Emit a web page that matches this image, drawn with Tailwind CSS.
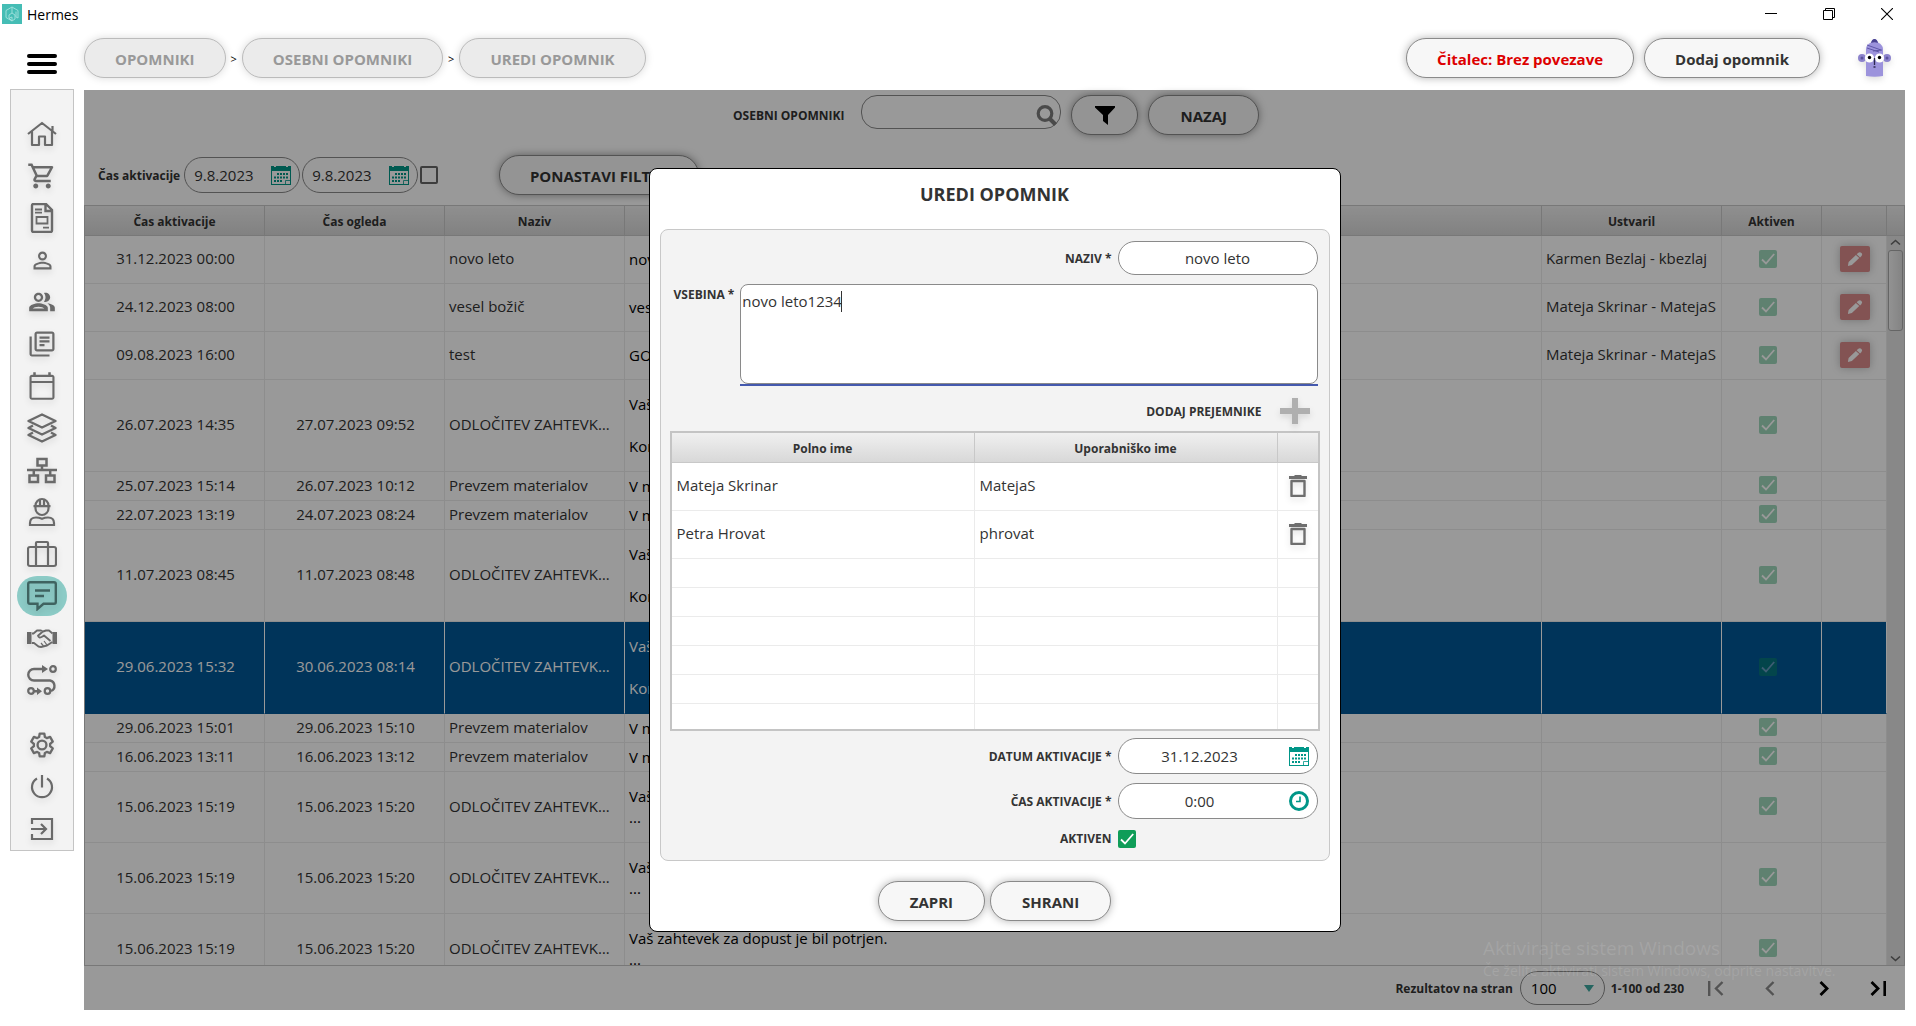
<!DOCTYPE html>
<html lang="sl">
<head>
    <meta charset="UTF-8">
    <meta name="viewport" content="width=device-width, initial-scale=1.0">
    <title>Hermes</title>
    <script src="https://cdn.jsdelivr.net/npm/@tailwindcss/browser@4"></script>
</head>
<body class="h-screen flex flex-col overflow-hidden bg-white font-['Open_Sans','Noto_Sans',sans-serif] text-[15px] leading-[21px] text-[#333]">

    <!-- Icon sprite -->
    <svg class="hidden">
        <symbol id="i-home" viewBox="0 0 30 30"><path d="M1 15L15 4l14 11M5 12.500V26h7v-8.500h6V26h7V12.500M25.500 7v6" fill="none" stroke="currentColor" stroke-width="2.200" stroke-linejoin="round"/></symbol>
        <symbol id="i-cart" viewBox="0 0 24 24"><path fill="currentColor" d="M15.550 13c.75 0 1.410-.41 1.750-1.030l3.580-6.490A.996.996 0 0 0 20.010 4H5.210l-.94-2H1v2h2l3.600 7.590-1.350 2.440C4.520 15.370 5.480 17 7 17h12v-2H7l1.100-2h7.450zM6.160 6h12.150l-2.760 5H8.530L6.160 6zM7 18c-1.100 0-1.990.9-1.990 2S5.900 22 7 22s2-.9 2-2-.9-2-2-2zm10 0c-1.100 0-1.990.9-1.990 2s.89 2 1.990 2 2-.9 2-2-.9-2-2-2z"/></symbol>
        <symbol id="i-doc" viewBox="0 0 30 30"><path d="M5 2.500q0-1.500 1.500-1.500H19l6 6v20.500q0 1.500-1.500 1.500h-17Q5 29 5 27.500zM18.500 1v7H25" fill="none" stroke="currentColor" stroke-width="2.400"/><path d="M9.500 14h11v6.500h-11zM8 6.500h7M8 9.700h7M16 24.700h6" fill="none" stroke="currentColor" stroke-width="1.800"/></symbol>
        <symbol id="i-person" viewBox="0 0 24 24"><path fill="currentColor" d="M12 5.900c1.160 0 2.100.94 2.100 2.100s-.94 2.100-2.100 2.100S9.900 9.160 9.900 8s.94-2.100 2.100-2.100m0 9c2.970 0 6.100 1.460 6.100 2.100v1.100H5.900V17c0-.64 3.130-2.100 6.100-2.100M12 4C9.790 4 8 5.790 8 8s1.790 4 4 4 4-1.790 4-4-1.790-4-4-4zm0 9c-2.670 0-8 1.340-8 4v3h16v-3c0-2.660-5.330-4-8-4z"/></symbol>
        <symbol id="i-people" viewBox="0 0 24 24"><path fill="currentColor" fill-rule="evenodd" d="M16.670 13.130C18.040 14.060 19 15.320 19 17v3h4v-3c0-2.180-3.570-3.470-6.330-3.870zM15 12c2.210 0 4-1.790 4-4s-1.790-4-4-4c-.47 0-.91.1-1.330.24C14.500 5.270 15 6.580 15 8s-.5 2.730-1.330 3.760c.42.14.86.24 1.330.24zM9 12c2.210 0 4-1.790 4-4s-1.790-4-4-4-4 1.790-4 4 1.790 4 4 4zm0-6c1.100 0 2 .9 2 2s-.9 2-2 2-2-.9-2-2 .9-2 2-2zM9 13c-2.670 0-8 1.340-8 4v3h16v-3c0-2.660-5.330-4-8-4zm5 4.500H4c.5-.7 2.800-1.500 5-1.500s4.500.8 5 1.500z"/></symbol>
        <symbol id="i-library" viewBox="0 0 24 24"><path fill="currentColor" fill-rule="evenodd" d="M4 6H2v14c0 1.100.9 2 2 2h14v-1.700H3.800V6zm16-4H8c-1.100 0-2 .9-2 2v12c0 1.100.9 2 2 2h12c1.100 0 2-.9 2-2V4c0-1.100-.9-2-2-2zm.2 14.200H7.800V3.800h12.400v12.400zM10 9h8v1.700h-8zM10 12h4v1.700h-4zM10 6h8v1.700h-8z"/></symbol>
        <symbol id="i-calendar" viewBox="0 0 24 24"><path fill="currentColor" fill-rule="evenodd" d="M20 3h-1V1h-2v2H7V1H5v2H4c-1.100 0-2 .9-2 2v16c0 1.100.9 2 2 2h16c1.100 0 2-.9 2-2V5c0-1.100-.9-2-2-2zm.3 18.300H3.700V9.500h16.600v11.800zm0-13.300H3.700V4.700h16.600V8z"/></symbol>
        <symbol id="i-layers" viewBox="0 0 30 30"><path d="M15 1.500l13.500 6.500L15 14.500 1.500 8zM6 12.500l-4.500 2.500L15 21.500 28.500 15 24 12.500M6 19.500L1.500 22 15 28.500 28.500 22 24 19.500" fill="none" stroke="currentColor" stroke-width="2.400" stroke-linejoin="round"/></symbol>
        <symbol id="i-network" viewBox="0 0 30 30"><path d="M10.500 4h9v6.500h-9zM2.500 20.500H11V27H2.500zM19 20.500h8.500V27H19zM15 10.500V15M0 15h30M6.800 15v5.500M23.200 15v5.500" fill="none" stroke="currentColor" stroke-width="2.500"/></symbol>
        <symbol id="i-worker" viewBox="0 0 30 30"><path d="M8.500 8.500v3a6.500 6.500 0 0 0 13 0v-3a6.500 6.500 0 0 0-13 0zM6.500 9.200h17M13 2.500v6.500M17 2.500v6.500M3 28v-2q0-5.500 6-5.500 3 0 6 1.200 3-1.200 6-1.200 6 0 6 5.500v2z" fill="none" stroke="currentColor" stroke-width="2.200"/></symbol>
        <symbol id="i-case" viewBox="0 0 30 30"><path d="M3 8h24q2 0 2 2v15q0 2-2 2H3q-2 0-2-2V10q0-2 2-2zM9 27V4q0-1 1-1h10q1 0 1 1v23" fill="none" stroke="currentColor" stroke-width="2.200"/></symbol>
        <symbol id="i-chat" viewBox="0 0 30 30"><path d="M3 1.200h24q1.800 0 1.800 1.800v18q0 1.800-1.800 1.800H16.500L10.500 28v-5.200H3q-1.800 0-1.800-1.800V3q0-1.800 1.800-1.800zM8 9.500h15M8 15h9" fill="none" stroke="currentColor" stroke-width="2.400"/></symbol>
        <symbol id="i-handshake" viewBox="0 0 30 30"><path d="M0 9h4.500v12H0zM25.500 9H30v12h-4.500z" fill="currentColor"/><path d="M5 10.500h1.500L10 7.500h4l2 1 3-1h3l3.500 3M5 20l2 0 4.500 3.500 2.500.5 2-.5 4-1 4.500-3 1-.5M15.500 8.800l-4.500 4q1 3 4.500.7l1.500-1 6.500 5.500" fill="none" stroke="currentColor" stroke-width="1.900" stroke-linejoin="round"/><path d="M14 20l2.500 3M17 18l3 4" fill="none" stroke="currentColor" stroke-width="1.200"/></symbol>
        <symbol id="i-route" viewBox="0 0 30 30"><path d="M17 4H7a5.500 5.500 0 0 0 0 11.500h16a5.500 5.500 0 0 1 1 10.500M6 26.200h5" fill="none" stroke="currentColor" stroke-width="2.400"/><circle cx="26" cy="4" r="2.800" fill="none" stroke="currentColor" stroke-width="2.200"/><circle cx="4" cy="26" r="2.800" fill="none" stroke="currentColor" stroke-width="2.200"/><circle cx="20.500" cy="26" r="2.800" fill="none" stroke="currentColor" stroke-width="2.200"/><path d="M15 0l6 4-6 4zM10 22.500l5 3.700-5 3.700z" fill="currentColor"/></symbol>
        <symbol id="i-gear" viewBox="0 0 24 24"><g fill="none" stroke="currentColor" stroke-width="2" stroke-linejoin="round"><path d="M18.930 12.980c.04-.32.07-.64.07-.98 0-.34-.03-.66-.07-.98l2.310-1.950-2.300-4-2.780 1.080c-.52-.4-1.080-.73-1.690-.98L14 2.300h-4l-.47 2.870c-.61.25-1.170.59-1.690.98L5.060 5.070l-2.300 4 2.310 1.950c-.04.32-.07.65-.07.98 0 .33.03.66.07.98l-2.310 1.950 2.300 4 2.780-1.080c.52.4 1.080.73 1.690.98L10 21.700h4l.47-2.870c.61-.25 1.170-.59 1.690-.98l2.780 1.080 2.300-4z"/><circle cx="12" cy="12" r="3.800"/></g></symbol>
        <symbol id="i-power" viewBox="0 0 30 30"><path d="M10 6.500A10 10 0 1 0 20 6.500M15 3v12.500" fill="none" stroke="currentColor" stroke-width="2.200"/></symbol>
        <symbol id="i-exit" viewBox="0 0 30 30"><path d="M5 10V5h20v20H5v-5M4 15h14.500M14 10l5 5-5 5" fill="none" stroke="currentColor" stroke-width="2.200"/></symbol>
        <symbol id="i-date" viewBox="0 0 20 20"><path fill="currentColor" fill-rule="evenodd" d="M0 1h3v1h2V1h10v1h2V1h3v19H0zM1 6v13h18V6z"/><path fill="currentColor" d="M6 8h2v2H6zM9 8h2v2H9zM12 8h2v2h-2zM15 8h2v2h-2zM3 11.500h2v2H3zM6 11.500h2v2H6zM9 11.500h2v2H9zM12 11.500h2v2h-2zM15 11.500h2v2h-2zM3 15h2v2H3zM6 15h2v2H6zM9 15h2v2H9z"/><path d="M14.500 19v-3.500H19" fill="none" stroke="currentColor" stroke-width=".8"/></symbol>
        <symbol id="i-clock" viewBox="0 0 20 20"><circle cx="10" cy="10" r="8.500" fill="none" stroke="currentColor" stroke-width="3"/><path d="M11 5.500v5H7" fill="none" stroke="currentColor" stroke-width="1.600"/></symbol>
        <symbol id="i-check" viewBox="0 0 18 18"><path d="M3 9.500l4 4L15.200 4" fill="none" stroke="currentColor" stroke-width="1.800"/></symbol>
        <symbol id="i-pencil" viewBox="0 0 18 18"><path fill="currentColor" d="M1 17l.8-4.500L10 4.500 13.800 8l-8.300 7.800zM10.900 3.600l1.500-1.400q2-1.800 3.900 0 1.600 1.800-.2 3.600L14.700 7.200z"/></symbol>
        <symbol id="i-trash" viewBox="0 0 18 22"><path fill="currentColor" d="M0 1h5l1-1h6l1 1h5v3H0z"/><path d="M2.500 6h13v15h-13z" fill="none" stroke="currentColor" stroke-width="2.400" stroke-linejoin="round"/></symbol>
    </svg>

    <!-- Title bar -->
    <div class="h-7 shrink-0 flex items-center pl-[2px] text-black">
        <svg class="size-5" viewBox="0 0 20 20"><path fill="#45bdb5" d="M0 0h20v20H0z"/><path d="M10 3l6 3.500V14l-2-1V7.500M10 3L4 6.500v7L10 17v-4l-2.500 1M10 3v6L7 11v3l3 3 3-2v-4l-3-2" fill="none" stroke="#a5e3df" stroke-width=".9"/></svg>
        <span class="ml-[5px] text-[14px]">Hermes</span>
        <div class="ml-auto flex h-full">
            <button class="w-[58px] flex items-center justify-center" aria-label="Pomanjšaj"><svg class="size-3" viewBox="0 0 12 12"><path d="M0 5.500h12" stroke="#000"/></svg></button>
            <button class="w-[58px] flex items-center justify-center" aria-label="Obnovi"><svg class="size-3" viewBox="0 0 12 12"><path d="M.5 2.500h9v9h-9zM2.500 2.500v-2h9v9h-2" fill="none" stroke="#000"/></svg></button>
            <button class="w-[58px] flex items-center justify-center" aria-label="Zapri okno"><svg class="size-3" viewBox="0 0 12 12"><path d="M0 0l12 12M12 0L0 12" stroke="#000" stroke-width="1.100"/></svg></button>
        </div>
    </div>

    <!-- Header with breadcrumbs -->
    <header class="shrink-0 flex items-center pt-[10px] pb-[11px] pr-[25px]">
        <div class="w-[84px] shrink-0 self-end mb-1 flex justify-center">
            <button aria-label="Meni"><svg class="w-[30px] h-5 block" viewBox="0 0 30 20"><path d="M2 2h26M2 10h26M2 18h26" stroke="#000" stroke-width="4" stroke-linecap="round"/></svg></button>
        </div>
        <nav class="flex items-center gap-[5px] text-[11px] text-black">
            <button class="h-10 px-[30px] pt-[2px] rounded-full border border-[#bbb] bg-[#ebebeb] text-[15px] font-bold text-[#999] shadow-[0_0_8px_rgba(0,0,0,0.15)]" disabled>OPOMNIKI</button>
            <span>&gt;</span>
            <button class="h-10 px-[30px] pt-[2px] rounded-full border border-[#bbb] bg-[#ebebeb] text-[15px] font-bold text-[#999] shadow-[0_0_8px_rgba(0,0,0,0.15)]" disabled>OSEBNI OPOMNIKI</button>
            <span>&gt;</span>
            <button class="h-10 px-[30px] pt-[2px] rounded-full border border-[#bbb] bg-[#ebebeb] text-[15px] font-bold text-[#999] shadow-[0_0_8px_rgba(0,0,0,0.15)]" disabled>UREDI OPOMNIK</button>
        </nav>
        <button class="ml-auto h-10 px-[30px] pt-[2px] rounded-full border border-[#8a8a8a] bg-[#f7f7f7] text-[15px] font-bold text-[#dd0000] shadow-[0_0_8px_rgba(0,0,0,0.3)]">Čitalec: Brez povezave</button>
        <button class="ml-[10px] h-10 px-[30px] pt-[2px] rounded-full border border-[#8a8a8a] bg-[#f7f7f7] text-[15px] font-bold shadow-[0_0_8px_rgba(0,0,0,0.3)]">Dodaj opomnik</button>
        <svg class="ml-[38px] w-[33px] h-[38px] drop-shadow-md" viewBox="0 0 33 38">
            <path d="M8 37V10q0-4 5-6.500Q14 0 16.500 0T20 3.500q5 2.500 5 6.500v27q-8 1.500-17 0z" fill="#9c93dc"/>
            <path d="M13 4q1-4 3.500-4T20 4q-3.500-1.500-7 0z" fill="#4a4390"/>
            <circle cx="4" cy="19" r="4" fill="#8c83cc"/><circle cx="29" cy="19" r="4" fill="#8c83cc"/>
            <circle cx="4" cy="19" r="1.500" fill="#5a529c"/><circle cx="29" cy="19" r="1.500" fill="#5a529c"/>
            <path d="M9 6l14 5M9 9l12 4M15 12l9-1" stroke="#5f57a8" fill="none"/>
            <circle cx="11.500" cy="19" r="4.600" fill="#fff"/><circle cx="21.500" cy="19" r="4.600" fill="#fff"/>
            <circle cx="11.500" cy="18.500" r="1.700"/><circle cx="21.500" cy="18.500" r="1.700"/>
            <path d="M16.500 19v7M15.500 28h2" stroke="#2c2850" stroke-width="1.300"/>
        </svg>
    </header>

    <div class="flex-1 min-h-0 flex pr-[11px] pb-4">
        <!-- Side menu -->
        <aside class="w-[84px] shrink-0 px-[10px]">
            <nav id="sideMenu" class="border border-[#c4c4c4] bg-[#f3f3f3] pt-[23px] flex flex-col items-center text-[#6a6a6a]"></nav>
        </aside>

        <section class="relative mt-px flex-1 min-w-0 flex flex-col bg-white">
            <!-- Search and filter -->
            <div class="flex justify-center items-start gap-[10px] pt-[5px] pl-[3px]">
                <label for="search" class="h-10 flex items-center text-[12px] font-bold mr-[7px]">OSEBNI OPOMNIKI</label>
                <div class="relative">
                    <input id="search" type="text" class="w-[200px] h-[34px] pl-3 pr-8 rounded-[16px] border border-[#8a8a8a]">
                    <svg class="absolute right-1 top-[10px] size-[21px] text-[#7c7c7c]" viewBox="0 0 21 21"><circle cx="9" cy="8.500" r="6.800" fill="none" stroke="currentColor" stroke-width="3.200"/><path d="M13.500 13.500l6 6" stroke="currentColor" stroke-width="4"/></svg>
                </div>
                <button aria-label="Filter" class="w-[67px] h-10 flex items-center justify-center rounded-full border border-[#8a8a8a] bg-[#f7f7f7] text-black shadow-[0_0_8px_rgba(0,0,0,0.4)]">
                    <svg class="w-5 h-[19px]" viewBox="0 0 20 19"><path d="M0 0h20v1.500L13 9v10l-5-4V9L0 1.500z" fill="currentColor"/></svg>
                </button>
                <button class="h-10 px-[31px] pt-[2px] rounded-full border border-[#8a8a8a] bg-[#f7f7f7] text-[15px] font-bold shadow-[0_0_8px_rgba(0,0,0,0.4)]">NAZAJ</button>
            </div>
            <div class="flex items-center pl-[14px] mt-5 mb-[10px]">
                <label for="dateFrom" class="text-[12px] font-bold mr-1">Čas aktivacije</label>
                <div class="relative mr-[2px]">
                    <input id="dateFrom" type="text" value="9.8.2023" class="block w-[116px] h-9 pl-[9px] rounded-full border border-[#8a8a8a]">
                    <svg class="absolute right-[9px] top-2 size-5 text-[#009688]"><use href="#i-date"/></svg>
                </div>
                <div class="relative mr-[2px]">
                    <input id="dateTo" type="text" aria-label="Čas aktivacije do" value="9.8.2023" class="block w-[116px] h-9 pl-[9px] rounded-full border border-[#8a8a8a]">
                    <svg class="absolute right-[9px] top-2 size-5 text-[#009688]"><use href="#i-date"/></svg>
                </div>
                <input type="checkbox" aria-label="Filtriraj po času" class="appearance-none size-[18px] rounded-[2px] border-2 border-[#666]">
                <button class="ml-[61px] h-10 w-[200px] pt-[2px] rounded-full border border-[#8a8a8a] bg-[#f7f7f7] text-[15px] font-bold shadow-[0_0_8px_rgba(0,0,0,0.4)]">PONASTAVI FILTRE</button>
            </div>

            <!-- Reminders table -->
            <div class="flex-1 min-h-0 overflow-hidden flex border border-[#c8c8c8]">
                <div class="flex-1 min-w-0 overflow-hidden">
                    <table class="w-full table-fixed border-separate border-spacing-0">
                        <colgroup><col class="w-[180px]"><col class="w-[180px]"><col class="w-[180px]"><col><col class="w-[180px]"><col class="w-[100px]"><col class="w-[65px]"></colgroup>
                        <thead>
                            <tr class="text-[12px] [&>th]:h-[30px] [&>th]:p-0 [&>th]:pt-[2px] [&>th]:font-bold [&>th]:border-r [&>th]:border-b [&>th]:border-[#c8c8c8] [&>th]:bg-linear-to-b [&>th]:from-[#efefef] [&>th]:to-[#d8d8d8]">
                                <th>Čas aktivacije</th><th>Čas ogleda</th><th>Naziv</th><th>Vsebina</th><th>Ustvaril</th><th>Aktiven</th><th></th>
                            </tr>
                        </thead>
                        <tbody id="reminders"></tbody>
                    </table>
                </div>
                <div class="w-[17px] shrink-0 flex flex-col bg-[#e3e3e3]">
                    <div class="h-[30px] shrink-0 border-b border-[#c8c8c8] bg-linear-to-b from-[#efefef] to-[#d8d8d8]"></div>
                    <svg class="w-full h-[14px] shrink-0" viewBox="0 0 17 14"><path d="M4 8.500l4.500-4 4.500 4" fill="none" stroke="#666" stroke-width="1.600"/></svg>
                    <div class="mx-px h-[81px] shrink-0 rounded-[3px] border border-[#a8a8a8] bg-linear-to-r from-[#f4f4f4] to-[#dcdcdc]"></div>
                    <svg class="mt-auto w-full h-[14px] shrink-0" viewBox="0 0 17 14"><path d="M4 5.500l4.500 4 4.500-4" fill="none" stroke="#666" stroke-width="1.600"/></svg>
                </div>
            </div>

            <!-- Paging -->
            <div class="h-11 shrink-0 flex items-center justify-end text-[12px] font-bold">
                <label for="pageSize" class="mr-[7px]">Rezultatov na stran</label>
                <div class="relative">
                    <select id="pageSize" class="block appearance-none w-[85px] h-[34px] pl-[10px] rounded-full border border-[#8a8a8a] text-[15px] font-normal text-black"><option>100</option></select>
                    <svg class="absolute right-[11px] top-[14px] w-[10px] h-[7px]" viewBox="0 0 10 7"><path d="M0 0h10L5 7z" fill="#3fa9a0"/></svg>
                </div>
                <span class="ml-[6px] mr-[5px]">1-100 od 230</span>
                <button class="w-[54px] flex justify-center text-[#8a8a8a]" aria-label="Prva stran"><svg class="w-4 h-[15px]" viewBox="0 0 16 15"><path d="M1.200 0v15M14.500 1L8 7.500l6.500 6.500" fill="none" stroke="currentColor" stroke-width="2.400"/></svg></button>
                <button class="w-[54px] flex justify-center text-[#8a8a8a]" aria-label="Prejšnja stran"><svg class="w-[10px] h-[15px]" viewBox="0 0 10 15"><path d="M8.500 1L2 7.500 8.500 14" fill="none" stroke="currentColor" stroke-width="2.400"/></svg></button>
                <button class="w-[54px] flex justify-center text-black" aria-label="Naslednja stran"><svg class="w-[10px] h-[15px]" viewBox="0 0 10 15"><path d="M1.500 1L8 7.500 1.500 14" fill="none" stroke="currentColor" stroke-width="2.800"/></svg></button>
                <button class="w-[54px] flex justify-center text-black" aria-label="Zadnja stran"><svg class="w-4 h-[15px]" viewBox="0 0 16 15"><path d="M14.800 0v15M1.500 1L8 7.500 1.500 14" fill="none" stroke="currentColor" stroke-width="2.800"/></svg></button>
            </div>

            <!-- Edit dialog -->
            <div class="absolute inset-0 bg-black/40 flex items-center justify-center">
                <div role="dialog" aria-labelledby="dialogTitle" class="w-[692px] px-[10px] pb-[10px] rounded-[8px] border border-black bg-white">
                    <h2 id="dialogTitle" class="h-[50px] mb-[10px] flex items-center justify-center text-[18px] font-bold">UREDI OPOMNIK</h2>
                    <form class="rounded-[8px] border border-[#c8c8c8] bg-[#f3f3f3] px-[9px] pt-[11px] pb-3" onsubmit="return false">
                        <div class="flex items-center justify-end gap-[6px] pr-[2px]">
                            <label for="name" class="text-[12px] font-bold">NAZIV *</label>
                            <input id="name" type="text" value="novo leto" class="w-[200px] h-[34px] rounded-full border border-[#8a8a8a] bg-white text-center">
                        </div>
                        <div class="flex gap-[6px] mt-[9px] pl-1 pr-[2px]">
                            <label for="content" class="text-[12px] font-bold shrink-0">VSEBINA *</label>
                            <div class="relative flex-1 border-b-2 border-[#4459ae]">
                                <textarea id="content" class="block w-full h-[100px] resize-none rounded-[8px] border border-[#8a8a8a] bg-white pl-px pt-[6px] outline-none">novo leto1234</textarea>
                                <span class="absolute left-[101px] top-[7px] w-px h-[21px] bg-[#333]"></span>
                            </div>
                        </div>
                        <div class="flex items-center justify-end gap-[18px] mt-3 mb-[7px] pr-[10px] h-[26px]">
                            <span class="text-[12px] font-bold">DODAJ PREJEMNIKE</span>
                            <button aria-label="Dodaj prejemnike"><svg class="w-[30px] h-[26px] drop-shadow-md" viewBox="0 0 30 26"><path d="M12 0h6v10h12v6H18v10h-6V16H0v-6h12z" fill="#afafaf"/></svg></button>
                        </div>
                        <div class="h-[300px] overflow-hidden border-2 border-[#c4c4c4] bg-white">
                            <table class="w-full table-fixed border-separate border-spacing-0">
                                <colgroup><col><col><col class="w-[40px]"></colgroup>
                                <thead>
                                    <tr class="text-[12px] [&>th]:h-[30px] [&>th]:p-0 [&>th]:pt-[2px] [&>th]:font-bold [&>th]:border-r [&>th]:border-b [&>th]:border-[#c8c8c8] [&>th:last-child]:border-r-0 [&>th]:bg-linear-to-b [&>th]:from-[#f0f0f0] [&>th]:to-[#d8d8d8]">
                                        <th>Polno ime</th><th>Uporabniško ime</th><th></th>
                                    </tr>
                                </thead>
                                <tbody id="recipients"></tbody>
                            </table>
                        </div>
                        <div class="flex items-center justify-end gap-[6px] mt-[7px] pr-[2px]">
                            <label for="actDate" class="text-[12px] font-bold">DATUM AKTIVACIJE *</label>
                            <div class="relative">
                                <input id="actDate" type="text" value="31.12.2023" class="block w-[200px] h-9 pr-9 rounded-full border border-[#8a8a8a] bg-white text-center">
                                <svg class="absolute right-[9px] top-2 size-5 text-[#009688]"><use href="#i-date"/></svg>
                            </div>
                        </div>
                        <div class="flex items-center justify-end gap-[6px] mt-[9px] pr-[2px]">
                            <label for="actTime" class="text-[12px] font-bold">ČAS AKTIVACIJE *</label>
                            <div class="relative">
                                <input id="actTime" type="text" value="0:00" class="block w-[200px] h-9 pr-9 rounded-full border border-[#8a8a8a] bg-white text-center">
                                <svg class="absolute right-[9px] top-2 size-5 text-[#009688]"><use href="#i-clock"/></svg>
                            </div>
                        </div>
                        <div class="flex items-center justify-end gap-[6px] mt-[11px] pr-[184px]">
                            <label for="active" class="text-[12px] leading-[18px] font-bold">AKTIVEN</label>
                            <span class="grid size-[18px]">
                                <input id="active" type="checkbox" checked class="[grid-area:1/1] appearance-none rounded-[2px] bg-[#0f9d58]">
                                <svg class="[grid-area:1/1] size-[18px] text-white pointer-events-none"><use href="#i-check"/></svg>
                            </span>
                        </div>
                    </form>
                    <div class="flex justify-center gap-[5px] mt-5">
                        <button class="h-10 px-[31px] pt-[2px] rounded-full border border-[#8a8a8a] bg-[#f7f7f7] text-[15px] font-bold shadow-[0_0_8px_rgba(0,0,0,0.3)]">ZAPRI</button>
                        <button class="h-10 px-[31px] pt-[2px] rounded-full border border-[#8a8a8a] bg-[#f7f7f7] text-[15px] font-bold shadow-[0_0_8px_rgba(0,0,0,0.3)]">SHRANI</button>
                    </div>
                </div>
            </div>
        </section>
    </div>

    <!-- Windows activation notice -->
    <div class="absolute right-[75px] bottom-11 w-[358px] whitespace-nowrap text-white/12 pointer-events-none">
        <p class="text-[19px] leading-6">Aktivirajte sistem Windows</p>
        <p class="text-[14px] leading-[22px]">Če želite aktivirati sistem Windows, odprite nastavitve.</p>
    </div>

    <script>
        // Side menu
        const menu = ['home', 'cart', 'doc', 'person', 'people', 'library', 'calendar', 'layers', 'network', 'worker', 'case', 'chat', 'handshake', 'route', 'gear', 'power', 'exit'];
        const small = { person: 'size-[27px]', people: 'size-7', gear: 'size-7' };

        document.getElementById('sideMenu').innerHTML = menu.map(name => `
            <button aria-label="${name}" class="w-[50px] h-[42px] shrink-0 flex items-center ${name === 'gear' ? 'mt-[23px]' : ''}">
                <span class="w-[50px] h-10 rounded-full flex items-center justify-center ${name === 'chat' ? 'bg-[#8ccbc6] text-[#3f6360]' : ''}">
                    <svg class="${small[name] || 'size-[30px]'} overflow-visible drop-shadow-md"><use href="#i-${name}"/></svg>
                </span>
            </button>`).join('');

        // Reminders: activated, viewed, title, content, author, row height
        const leave = 'Vaš zahtevek za dopust je bil potrjen.';
        const decision = 'ODLOČITEV ZAHTEVKA ZA DOPUST';
        const pickup = 'Prevzem materialov';
        const rows = [
            ['31.12.2023 00:00', '', 'novo leto', 'novo leto', 'Karmen Bezlaj - kbezlaj', 48],
            ['24.12.2023 08:00', '', 'vesel božič', 'vesel božič', 'Mateja Skrinar - MatejaS', 48],
            ['09.08.2023 16:00', '', 'test', 'GO', 'Mateja Skrinar - MatejaS', 48],
            ['26.07.2023 14:35', '27.07.2023 09:52', decision, leave + '<br><br>Komentar:', '', 92],
            ['25.07.2023 15:14', '26.07.2023 10:12', pickup, 'V modulu', '', 29],
            ['22.07.2023 13:19', '24.07.2023 08:24', pickup, 'V modulu', '', 29],
            ['11.07.2023 08:45', '11.07.2023 08:48', decision, leave + '<br><br>Komentar:', '', 92],
            ['29.06.2023 15:32', '30.06.2023 08:14', decision, leave + '<br><br>Komentar:', '', 92],
            ['29.06.2023 15:01', '29.06.2023 15:10', pickup, 'V modulu', '', 29],
            ['16.06.2023 13:11', '16.06.2023 13:12', pickup, 'V modulu', '', 29],
            ['15.06.2023 15:19', '15.06.2023 15:20', decision, leave + '<br>...', '', 71],
            ['15.06.2023 15:19', '15.06.2023 15:20', decision, leave + '<br>...', '', 71],
            ['15.06.2023 15:19', '15.06.2023 15:20', decision, leave + '<br>...', '', 71]
        ];
        const selected = 7;

        document.getElementById('reminders').innerHTML = rows.map((r, i) => `
            <tr style="height: ${r[5]}px" class="[&>td]:p-0 [&>td]:border-r [&>td]:border-b ${i === selected ? 'bg-[#005796] text-white [&>td]:border-r-white [&>td]:border-b-[#005796]' : '[&>td]:border-[#ebebeb]'}">
                <td><div class="pb-[2px] pl-[2px] text-center">${r[0]}</div></td>
                <td><div class="pb-[2px] pl-[2px] text-center">${r[1]}</div></td>
                <td><div class="pb-[2px] pl-1 pr-3 truncate">${r[2]}</div></td>
                <td><div class="px-1 ${i === selected ? '' : 'text-black'}">${r[3]}</div></td>
                <td><div class="pb-[2px] px-1 truncate">${r[4]}</div></td>
                <td>
                    <div class="pb-[2px] pr-2">
                        <span class="grid size-[18px] mx-auto opacity-40">
                            <input type="checkbox" checked disabled aria-label="Aktiven" class="[grid-area:1/1] appearance-none rounded-[2px] bg-[#0f9d58]">
                            <svg class="[grid-area:1/1] size-[18px] text-white"><use href="#i-check"/></svg>
                        </span>
                    </div>
                </td>
                <td>${r[4] ? `
                    <div class="pb-[2px] pl-[2px]">
                        <button aria-label="Uredi" class="mx-auto w-[30px] h-[26px] flex items-center justify-center rounded-[2px] bg-[#da8a8a] text-white shadow-[0_0_8px_rgba(0,0,0,0.25)]"><svg class="w-[18px] h-[16px]"><use href="#i-pencil"/></svg></button>
                    </div>` : ''}
                </td>
            </tr>`).join('');

        // Recipients, padded with empty rows
        const people = [['Mateja Skrinar', 'MatejaS'], ['Petra Hrovat', 'phrovat'], [], [], [], [], [], []];

        document.getElementById('recipients').innerHTML = people.map(p => `
            <tr class="[&>td]:p-0 [&>td]:border-r [&>td]:border-b [&>td]:border-[#ebebeb] [&>td:last-child]:border-r-0 ${p.length ? 'h-[48px]' : 'h-[29px]'}">
                <td><div class="pb-[2px] px-[5px]">${p[0] || ''}</div></td>
                <td><div class="pb-[2px] px-[5px]">${p[1] || ''}</div></td>
                <td>${p.length ? `<div class="pb-[2px]"><button aria-label="Odstrani" class="block mx-auto text-[#6e6e6e]"><svg class="w-[18px] h-[22px] drop-shadow-md"><use href="#i-trash"/></svg></button></div>` : ''}</td>
            </tr>`).join('');
    </script>

</body>
</html>
